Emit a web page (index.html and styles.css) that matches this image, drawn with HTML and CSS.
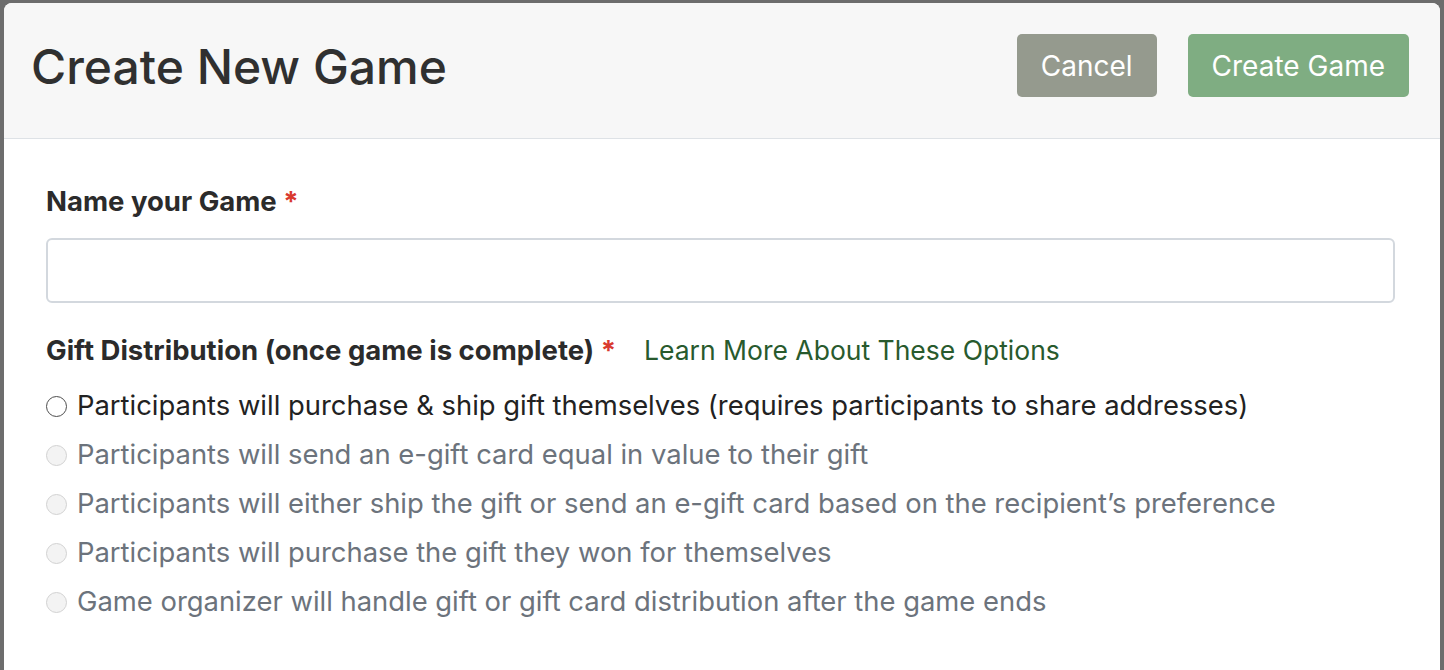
FILE: index.html
```html
<!DOCTYPE html>
<html lang="en">
<head>
<meta charset="utf-8">
<title>Create New Game</title>
<link rel="stylesheet" href="styles.css">
</head>
<body>
<div class="backdrop">
  <div class="modal">
    <div class="modal-header">
      <h1 class="modal-title">Create New Game</h1>
      <div class="actions">
        <button class="btn btn-cancel" type="button">Cancel</button>
        <button class="btn btn-create" type="button">Create Game</button>
      </div>
    </div>
    <div class="modal-body">
      <label class="field-label" for="game-name">Name your Game <span class="req">*</span></label>
      <input class="text-input" id="game-name" type="text">
      <div class="field-label gift-label">
        <span>Gift Distribution (once game is complete) <span class="req">*</span></span>
        <a class="learn-link" href="#">Learn More About These Options</a>
      </div>
      <div class="options">
        <div class="option"><span class="radio"></span><span class="option-text">Participants will purchase &amp; ship gift themselves (requires participants to share addresses)</span></div>
        <div class="option disabled"><span class="radio"></span><span class="option-text">Participants will send an e-gift card equal in value to their gift</span></div>
        <div class="option disabled"><span class="radio"></span><span class="option-text">Participants will either ship the gift or send an e-gift card based on the recipient’s preference</span></div>
        <div class="option disabled"><span class="radio"></span><span class="option-text">Participants will purchase the gift they won for themselves</span></div>
        <div class="option disabled"><span class="radio"></span><span class="option-text">Game organizer will handle gift or gift card distribution after the game ends</span></div>
      </div>
    </div>
  </div>
</div>
</body>
</html>
```
FILE: styles.css
```css
html, body {
  margin: 0;
  padding: 0;
  height: 100%;
  overflow: hidden;
}
body {
  font-family: Inter, "Open Sans", sans-serif;
  background: #6d6d6d;
}
.backdrop {
  height: 100%;
  padding: 3px 4px 0 4px;
  box-sizing: border-box;
}
.modal {
  background: #ffffff;
  border-radius: 8px 8px 0 0;
  height: 100%;
  overflow: hidden;
}
.modal-header {
  display: flex;
  align-items: center;
  justify-content: space-between;
  box-sizing: border-box;
  height: 136px;
  padding: 0 31px 8px 27px;
  background: #f7f7f7;
  border-bottom: 1px solid #dee2e6;
}
.modal-title {
  margin: 0;
  font-size: 48px;
  font-weight: 500;
  color: #303030;
}
.actions {
  display: flex;
  gap: 31px;
  margin-top: -2px;
}
.btn {
  height: 63px;
  padding: 0 24px;
  border: none;
  border-radius: 5px;
  font-family: inherit;
  font-size: 28px;
  font-weight: 400;
  color: #ffffff;
  cursor: pointer;
}
.btn-cancel {
  background: #959a8e;
}
.btn-create {
  background: #7fad82;
}
.modal-body {
  padding: 42px 45px 0 42px;
}
.field-label {
  display: block;
  font-size: 27.5px;
  line-height: 41px;
  font-weight: 700;
  color: #2b2b2b;
}
.req {
  color: #d93a2f;
  font-weight: 700;
}
.text-input {
  display: block;
  box-sizing: border-box;
  width: 100%;
  height: 65px;
  margin: 16px 0 0 0;
  border: 2px solid #d3d8de;
  border-radius: 6px;
  background: #ffffff;
  font-family: inherit;
  font-size: 27px;
  outline: none;
}
.gift-label {
  display: flex;
  align-items: baseline;
  gap: 28px;
  margin-top: 27px;
}
.learn-link {
  font-size: 26.5px;
  font-weight: 400;
  color: #285a2d;
  text-decoration: none;
}
.options {
  margin-top: 9px;
}
.option {
  display: flex;
  align-items: center;
  height: 49px;
  font-size: 27.4px;
  color: #222222;
}
.radio {
  box-sizing: border-box;
  width: 21px;
  height: 21px;
  margin: 3px 10px 0 0;
  border: 1.5px solid #4d4d4d;
  border-radius: 50%;
  background: #ffffff;
  flex: none;
}
.option.disabled {
  color: #6c737c;
}
.option.disabled .radio {
  border-color: #d2d2d2;
  background: #f3f3f3;
}
.option-text {
  white-space: nowrap;
}
```
